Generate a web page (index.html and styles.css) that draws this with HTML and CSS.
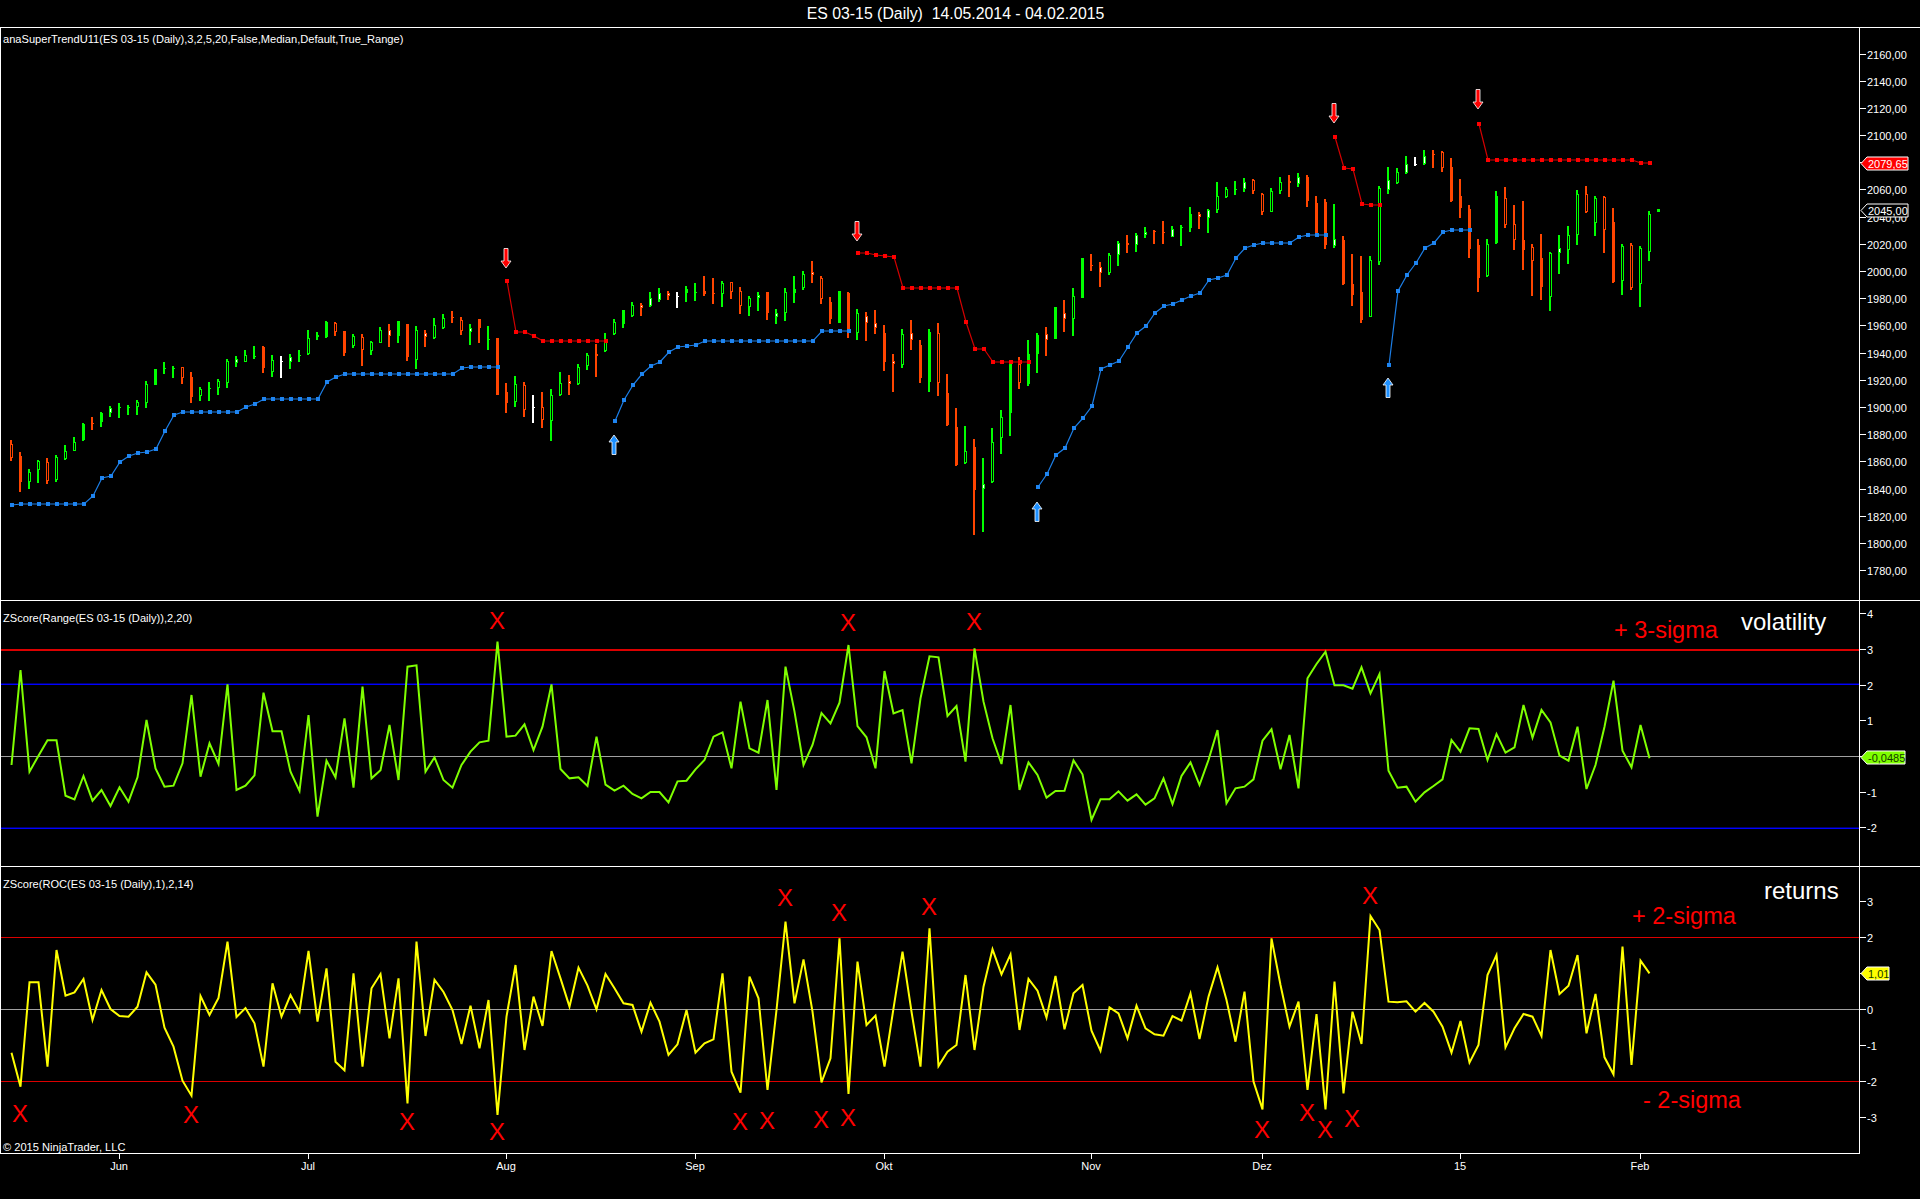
FILE: index.html
```html
<!DOCTYPE html>
<html lang="en">
<head>
    <meta charset="UTF-8">
    <title>ES 03-15 (Daily)</title>
    <link rel="stylesheet" href="styles.css">
</head>
<body>
    <div class="chart">
        <div class="title">ES 03-15 (Daily)&nbsp; 14.05.2014 - 04.02.2015</div>

        <div class="panel">
            <svg id="pricePanel" width="1920" height="572" viewBox="0 28 1920 572">
                <text class="legend" x="3" y="43">anaSuperTrendU11(ES 03-15 (Daily),3,2,5,20,False,Median,Default,True_Range)</text>
            </svg>
        </div>

        <div class="panel">
            <svg id="rangePanel" width="1920" height="265" viewBox="0 601 1920 265">
                <text class="legend" x="3" y="622">ZScore(Range(ES 03-15 (Daily)),2,20)</text>
                <text class="note note-red" x="1614" y="638">+ 3-sigma</text>
                <text class="note-big note-white" x="1741" y="630">volatility</text>
            </svg>
        </div>

        <div class="panel">
            <svg id="rocPanel" width="1920" height="286" viewBox="0 867 1920 286">
                <text class="legend" x="3" y="888">ZScore(ROC(ES 03-15 (Daily),1),2,14)</text>
                <text class="legend" x="3" y="1151">© 2015 NinjaTrader, LLC</text>
                <text class="note-big note-white" x="1764" y="899">returns</text>
                <text class="note note-red" x="1632" y="924">+ 2-sigma</text>
                <text class="note note-red" x="1643" y="1108">- 2-sigma</text>
            </svg>
        </div>

        <svg id="timeAxis" class="time-axis" width="1920" height="46" viewBox="0 1153 1920 46"></svg>
    </div>

    <script src="chart.js"></script>
</body>
</html>
```

FILE: styles.css
```css
body {
    margin: 0;
    background-color: black;
    color: white;
    font-family: "Liberation Sans", Arial, sans-serif;
    overflow: hidden;
}
.chart {
    display: flex;
    flex-direction: column;
    width: 1920px;
    height: 1199px;
}
.title {
    display: flex;
    align-items: center;
    justify-content: center;
    height: 27px;
    padding-right: 9px;
    font-size: 15.85px;
    white-space: pre;
}
.panel {
    border-top: 1px solid white;
}
svg {
    display: block;
}
text {
    font-family: "Liberation Sans", Arial, sans-serif;
}
.legend {
    fill: white;
    font-size: 11.1px;
}
.axis-label {
    fill: white;
    font-size: 11px;
}
.time-label {
    text-anchor: middle;
}
.note {
    font-size: 23.5px;
}
.note-big {
    font-size: 24px;
}
.note-red {
    fill: #f00;
}
.note-white {
    fill: white;
}
.mark {
    fill: #f00;
    font-size: 24px;
    text-anchor: middle;
}
.frame {
    fill: white;
    shape-rendering: crispEdges;
}
.candle {
    shape-rendering: crispEdges;
}
.up {
    fill: #0f0;
}
.down {
    fill: #ff4500;
}
.flat {
    fill: white;
}
.inner-black {
    fill: black;
}
.inner-white {
    fill: white;
}
.trend-blue {
    fill: none;
    stroke: #1c7ee6;
    stroke-width: 1.2;
}
.trend-red {
    fill: none;
    stroke: #d40000;
    stroke-width: 1.2;
}
.dot-blue {
    fill: #1e84f0;
    shape-rendering: crispEdges;
}
.dot-red {
    fill: #f00;
    shape-rendering: crispEdges;
}
.arrow-red {
    fill: #f00;
    stroke: white;
    stroke-width: 0.8;
}
.arrow-blue {
    fill: #1e90ff;
    stroke: white;
    stroke-width: 0.8;
}
.level {
    shape-rendering: crispEdges;
}
.level-red {
    fill: #dc0000;
}
.level-blue {
    fill: #00f;
}
.level-blue-dim {
    fill: #000070;
}
.level-gray {
    fill: #a0a0a0;
}
.zline-green {
    fill: none;
    stroke: #7fff00;
    stroke-width: 2;
}
.zline-yellow {
    fill: none;
    stroke: #ff0;
    stroke-width: 2;
}
.badge {
    stroke: white;
}
.badge-text {
    font-size: 11px;
}
.badge-red {
    fill: #f00;
}
.badge-black {
    fill: black;
}
.badge-green {
    fill: #7fff00;
}
.badge-yellow {
    fill: #ff0;
}
.badge-text-light {
    fill: white;
}
.badge-text-dark {
    fill: #143a00;
}
```

FILE: chart.js
```js
// bars are 9px apart, first one at x = 11.5
function barX(i) {
    return 11.5 + 9 * i;
}

// all y values below were read off 3x crops, so y = top + value / 3
function pageY(top, v) {
    return top + v / 3;
}

// colour+type hi lo bodyTop bodyBottom
// g/o/w = green, orange, white; f/h/w = filled, hollow, white centre
const candleBlocks = [
    [240, `oh 600 662 612 653,of 636 755 648 725,gh 687 747 695 725,gh 660 728 662 690,oh 655 732 667 722,gh 645 725 650 720,
        gh 615 660 632 658,gh 590 632 605 632,gf 548 603 552 600,of 530 570 548 552,gf 516 560 518 545,gw 498 530 503 520,
        gf 490 533 500 505,gf 495 525 500 503,gh 480 525 485 500,gh 422 503 432 488,gf 387 435 387 435,gf 366 402 385 388,
        gf 378 414 385 388,oh 381 431 382 413,of 396 488 410 470,gh 441 483 448 468,gf 427 483 445 448,gh 417 465 423 445,
        gh 357 443 362 428,gw 348 380 358 368,gh 330 365 345 365,gf 318 357 347 350,of 318 398 320 385,gh 345 411 360 395,
        wf 348 414 362 364,gw 342 387 352 367,gf 330 365 345 348,gh 270 345 295 342,gf 275 300 285 292,gf 243 293 245 290,
        oh 246 288 248 275,of 273 348 273 340,gh 282 323 288 318,oh 282 378 290 330,gh 303 345 305 332,gh 262 308 270 308,
        ow 252 321 270 288,gf 243 308 243 288,of 252 363 252 352,gh 258 387 270 360,ow 270 321 278 292,gh 234 297 255 295,
        gh 222 267 235 265,of 213 249 232 234,oh 232 285 240 272,gw 252 315 265 275,of 237 309 237 265,gf 258 330 298 300,
        of 294 465 294 465,of 429 519 455 488,gh 408 501 432 486,oh 426 531 435 510,wf 465 549 501 503,oh 456 564 502 540,
        gh 447 603 465 542,gh 396 468 430 466,ow 405 465 423 432,gh 372 435 380 432,gh 339 390 345 378,of 312 411 343 347,
        gh 279 336 297 333,gh 237 285 245 282,gf 210 264 210 252,gh 186 231 195 228`],
    [220, `ow 250 288 256 265,gw 215 260 235 258,gw 204 246 220 240,ow 213 240 218 228,wf 216 264 229 231,gf 198 246 208 218,
        gf 189 243 217 219,of 168 228 214 222,of 174 252 220 223,gh 183 261 190 222,oh 186 237 187 216,oh 201 282 213 257,
        gh 228 288 235 260,gw 216 273 226 235,of 216 300 216 280,gw 267 312 280 290,gh 204 303 216 278,gf 168 249 208 218,
        gh 153 210 162 205,ow 123 189 156 165,oh 168 252 175 237,of 231 312 245 298,gf 213 309 213 309,of 216 354 218 336,
        gh 267 360 280 340,ow 276 363 287 308,ow 270 342 309 323,of 315 453 340 425,ow 402 516 423 433,gh 327 444 342 434,
        ow 300 390 340 360,of 360 489 375 475,gf 327 516 335 485,oh 309 528 340 488,of 462 618 520 615,of 564 738 622 735,
        gh 618 732 693 730,of 657 945 680 810,gw 714 936 793 808,gh 624 789 667 785,gh 570 702 590 655,gf 432 648 432 578,
        oh 411 507 432 490,gf 360 498 402 492,gf 339 459 345 402,ow 321 408 343 360,gf 261 357 261 357,ow 240 336 280 296,
        gh 204 348 228 298,gf 114 234 114 234,of 102 153 135 137,ow 126 201 140 160,gh 99 165 105 160,gw 63 138 68 105,
        ow 45 99 70 75,gw 39 96 45 75,gw 21 54 35 45,of 30 72 32 34,of 3 72 37 40`],
    [150, `gw 228 261 238 260,gf 225 288 231 234,gf 171 246 192 234,ow 186 237 192 200,gw 177 249 180 204,gh 96 189 138 180,
        gh 111 144 117 142,gf 93 135 118 120,gw 84 126 96 117,oh 87 132 90 122,oh 129 195 132 186,gh 114 186 123 185`],
    [60, `gh 351 402 366 393,ow 345 411 364 370,gw 339 381 352 372,of 345 441 352 423,of 408 522 430 520,of 417 567 427 555,
        gw 432 564 537 557,of 528 675 540 673,of 582 738 672 705,of 588 789 695 780,gh 588 771 600 770,gh 378 615 385 605,
        gw 321 402 360 390,gh 324 372 336 370,gw 288 342 312 340,wf 291 318 311 314,gw 270 315 288 313,of 270 324 283 285,
        oh 273 335 275 323,of 294 426 320 423,of 357 474 408 445,of 435 594 447 568,of 537 696 555 655,gh 537 651 553 649,
        gf 393 552 408 550,oh 381 504 415 495,oh 435 570 492 540,of 423 630 540 570,oh 552 708 562 603,of 522 720 595 680,
        gh 576 753 578 712,gw 525 642 565 580,gh 498 612 525 570,gh 390 555 403 526,oh 378 459 403 456,gh 408 528 415 490,
        oh 408 579 410 510,of 444 669 485 667,gh 552 705 558 662,oh 549 690 555 685,gh 558 741 565 673,gh 453 603 462 575,
        gf 447 456 447 456`]
];

const trendRuns = [
    ['blue', 0, 240, [795, 792, 792, 792, 792, 792, 792, 792, 792, 768, 714, 708, 666, 648, 639, 636, 627, 573, 525,
        516, 516, 516, 516, 516, 516, 516, 501, 492, 477, 477, 477, 477, 477, 477, 477, 426, 411,
        402, 402, 402, 402, 402, 402, 402, 402, 402, 402, 402, 402, 402, 384, 381, 381, 381, 381]],
    ['red', 55, 240, [123, 276, 276, 288, 303, 303, 303, 303, 303, 303, 303, 303]],
    ['blue', 67, 220, [603, 540, 495, 462, 438, 426, 396, 381, 378, 375, 363, 363, 363, 363, 363, 363, 363, 363, 363,
        363, 363, 363, 363, 333, 333, 333, 333]],
    ['red', 94, 220, [99, 99, 105, 108, 111, 204, 204, 204, 204, 204, 204, 204, 306, 387, 387, 426, 426, 426, 426, 426]],
    ['blue', 114, 220, [801, 762, 705, 684, 624, 594, 558, 447, 435, 423, 381, 339, 318, 279, 258, 252, 240, 228, 219,
        180, 174, 165, 114, 84, 75, 69, 69, 69, 69, 51, 45, 45, 45]],
    ['red', 147, 60, [231, 324, 327, 432, 436, 436]],
    ['blue', 153, 60, [915, 693, 645, 609, 564, 549, 516, 510, 510, 510]],
    ['red', 163, 60, [192, 300, 300, 300, 300, 300, 300, 300, 300, 300, 300, 300, 300, 300, 300, 300, 300, 300, 309, 309]]
];

const rangeSeries = [525, 240, 545, 497, 451, 451, 617, 628, 558, 632, 600, 648, 592, 635, 562, 390, 535, 590, 587, 520,
    315, 560, 460, 522, 283, 600, 587, 556, 308, 424, 424, 545, 603, 375, 680, 512, 562, 385, 593, 290,
    565, 541, 405, 570, 230, 226, 545, 502, 570, 593, 525, 485, 457, 452, 155, 440, 437, 403, 480, 410,
    283, 537, 565, 562, 588, 440, 584, 602, 587, 612, 625, 606, 606, 637, 574, 572, 538, 510, 440, 427,
    535, 335, 475, 488, 330, 600, 230, 365, 525, 465, 369, 400, 338, 165, 408, 442, 535, 243, 370, 360,
    520, 325, 199, 202, 378, 348, 515, 175, 335, 445, 522, 345, 600, 517, 555, 623, 603, 602, 511, 553,
    690, 628, 628, 604, 632, 613, 644, 625, 565, 642, 558, 517, 585, 510, 420, 640, 595, 590, 568, 452,
    418, 538, 435, 595, 265, 222, 185, 286, 286, 296, 232, 310, 252, 542, 593, 590, 635, 607, 588, 568,
    450, 485, 415, 417, 510, 432, 488, 472, 345, 443, 360, 397, 497, 512, 410, 597, 525, 410, 272, 482,
    532, 405, 505];

const rocSeries = [548, 650, 337, 337, 590, 240, 377, 367, 327, 450, 360, 417, 438, 440, 410, 307, 344, 473, 530, 632,
    677, 378, 435, 384, 215, 441, 414, 460, 590, 340, 440, 375, 425, 243, 455, 295, 575, 601, 310, 590,
    355, 312, 505, 325, 700, 215, 498, 329, 366, 420, 522, 407, 535, 390, 735, 440, 285, 540, 380, 468,
    243, 325, 410, 293, 347, 418, 312, 355, 400, 405, 485, 398, 455, 555, 523, 420, 548, 520, 508, 310,
    605, 668, 320, 385, 660, 420, 155, 400, 268, 425, 637, 565, 205, 672, 275, 465, 437, 590, 415, 245,
    425, 590, 175, 588, 545, 525, 315, 540, 350, 238, 313, 253, 480, 327, 362, 443, 318, 478, 370, 345,
    482, 542, 412, 430, 505, 407, 475, 493, 497, 438, 452, 370, 507, 380, 292, 390, 515, 365, 635, 718,
    205, 345, 470, 395, 660, 432, 718, 335, 670, 425, 522, 138, 180, 395, 397, 394, 425, 399, 425, 470,
    548, 453, 578, 525, 315, 255, 532, 475, 432, 440, 498, 240, 372, 347, 255, 490, 372, 562, 613, 230,
    585, 272, 310];

const rangeMarks = [[497, 621], [848, 623], [974, 622]];
const rocMarks = [[20, 1114], [191, 1115], [407, 1122], [497, 1132], [785, 898], [839, 913], [929, 907], [740, 1122],
    [767, 1121], [821, 1120], [848, 1118], [1262, 1130], [1370, 896], [1307, 1113], [1325, 1130], [1352, 1119]];

const downArrows = [[506, 248], [857, 221], [1334, 103], [1478, 89]];
const upArrows = [[614, 435], [1037, 502], [1388, 378]];

const monthTicks = [[12, 'Jun'], [33, 'Jul'], [55, 'Aug'], [76, 'Sep'], [97, 'Okt'], [120, 'Nov'], [139, 'Dez'], [161, '15'], [181, 'Feb']];

function rect(cls, x, y, w, h) {
    return '<rect class="' + cls + '" x="' + x + '" y="' + y + '" width="' + w + '" height="' + h + '"/>';
}

function frame(top, height) {
    return rect('frame', 0, top, 1, height) + rect('frame', 1859, top, 1, height);
}

// a label left out sits behind a value badge in the real chart
function axisTick(y, label) {
    let row = Math.floor(y);
    let html = rect('frame', 1860, row, 6, 1);
    if (label !== null) {
        html += '<text class="axis-label" x="1867" y="' + (row + 4.5) + '">' + label + '</text>';
    }
    return html;
}

function level(cls, y, h) {
    return rect('level ' + cls, 1, y, 1858, h);
}

function badge(y, width, cls, textCls, label) {
    let left = 1861, right = left + width, mid = y + 6.5;
    let pts = [[left, mid], [left + 6, y], [right, y], [right, y + 13], [left + 6, y + 13]];
    return '<polygon class="badge ' + cls + '" points="' + pts.join(' ') + '"/>' +
        '<text class="badge-text ' + textCls + '" x="1868" y="' + (y + 11) + '">' + label + '</text>';
}

function markText(marks) {
    return marks.map(function (m) {
        return '<text class="mark" x="' + m[0] + '" y="' + (m[1] + 7.5) + '">X</text>';
    }).join('');
}

function zLine(cls, series) {
    let pts = series.map(function (v, i) {
        return barX(i) + ',' + pageY(590, v);
    });
    return '<polyline class="' + cls + '" points="' + pts.join(' ') + '"/>';
}

function drawCandle(i, row, top) {
    let parts = row.trim().split(' ');
    let colour = { g: 'up', o: 'down', w: 'flat' }[parts[0][0]];
    let kind = parts[0][1];
    let hi = Math.round(pageY(top, +parts[1])), lo = Math.round(pageY(top, +parts[2]));
    let bodyTop = Math.round(pageY(top, +parts[3])), bodyBot = Math.round(pageY(top, +parts[4]));
    let bodyH = Math.max(1, bodyBot - bodyTop);
    let x = Math.floor(barX(i)) - 1;

    let html = rect('candle ' + colour, x, hi, 2, lo - hi) + rect('candle ' + colour, x, bodyTop, 3, bodyH);
    if (kind !== 'f' && bodyH > 2) {
        let inner = kind === 'w' ? 'inner-white' : 'inner-black';
        html += rect('candle ' + inner, x + 1, bodyTop + 1, 1, bodyH - 2);
    }
    return html;
}

function drawTrend(run) {
    let name = run[0], start = run[1], top = run[2], values = run[3];
    let pts = values.map(function (v, n) {
        return (barX(start + n) + 0.5) + ',' + Math.round(pageY(top, v));
    });
    let html = '<polyline class="trend-' + name + '" points="' + pts.join(' ') + '"/>';
    values.forEach(function (v, n) {
        html += rect('dot-' + name, Math.floor(barX(start + n)) - 1, Math.round(pageY(top, v)) - 2, 4, 4);
    });
    return html;
}

// 20px tall arrows, x is the shaft centre and y the top edge
function drawArrow(cls, x, y, pointsDown) {
    let pts;
    if (pointsDown) {
        pts = [[x - 2, y + 0.5], [x + 2, y + 0.5], [x + 2, y + 13], [x + 5, y + 13], [x, y + 20], [x - 5, y + 13], [x - 2, y + 13]];
    } else {
        pts = [[x, y], [x + 5, y + 7], [x + 2, y + 7], [x + 2, y + 19.5], [x - 2, y + 19.5], [x - 2, y + 7], [x - 5, y + 7]];
    }
    return '<polygon class="' + cls + '" points="' + pts.join(' ') + '"/>';
}

function add(id, html) {
    document.getElementById(id).insertAdjacentHTML('beforeend', html);
}

// price panel
let price = frame(28, 572);
for (let p = 2160; p >= 1780; p -= 20) {
    price += axisTick(570.65 - (p - 1780) * 1.3596, p === 2080 ? null : p + ',00');
}
let bar = 0;
for (let block of candleBlocks) {
    for (let row of block[1].split(',')) {
        price += drawCandle(bar, row, block[0]);
        bar++;
    }
}
for (let run of trendRuns) {
    price += drawTrend(run);
}
for (let a of downArrows) {
    price += drawArrow('arrow-red', a[0], a[1], true);
}
for (let a of upArrows) {
    price += drawArrow('arrow-blue', a[0], a[1], false);
}
price += badge(157, 47, 'badge-red', 'badge-text-light', '2079,65');
price += badge(204, 47, 'badge-black', 'badge-text-light', '2045,00');
add('pricePanel', price);

// volatility panel
let range = frame(601, 265);
range += level('level-red', 649, 2) + level('level-blue-dim', 683, 1) + level('level-blue', 684, 1);
range += level('level-gray', 756, 1) + level('level-blue-dim', 827, 1) + level('level-blue', 828, 1);
for (let v of [4, 3, 2, 1, 0, -1, -2]) {
    range += axisTick(756.5 - 35.7 * v, v === 0 ? null : v);
}
range += zLine('zline-green', rangeSeries) + markText(rangeMarks);
range += badge(751, 44, 'badge-green', 'badge-text-dark', '-0,0485');
add('rangePanel', range);

// returns panel
let roc = frame(867, 287);
roc += level('level-red', 937, 1) + level('level-gray', 1009, 1) + level('level-red', 1081, 1);
for (let v of [3, 2, 1, 0, -1, -2, -3]) {
    roc += axisTick(1009.5 - 36 * v, v === 1 ? null : v);
}
roc += zLine('zline-yellow', rocSeries.map(function (v) { return v + 840; })) + markText(rocMarks);
roc += badge(967, 28, 'badge-yellow', 'badge-text-dark', '1,01');
add('rocPanel', roc);

// time axis
let time = rect('frame', 0, 1153, 1860, 1);
for (let t of monthTicks) {
    let x = barX(t[0]);
    time += rect('frame', Math.floor(x), 1154, 1, 5);
    time += '<text class="axis-label time-label" x="' + (x - 0.5) + '" y="1170">' + t[1] + '</text>';
}
add('timeAxis', time);
```
